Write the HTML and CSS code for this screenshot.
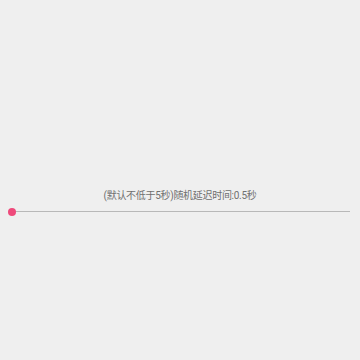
FILE: index.html
```html
<!DOCTYPE html>
<html>
<head>
<meta charset="utf-8">
<link rel="stylesheet" href="styles.css">
</head>
<body>
<div class="panel">
  <div class="label">(默认不低于5秒)随机延迟时间:0.5秒</div>
  <div class="slider">
    <div class="track"></div>
    <div class="thumb"></div>
  </div>
</div>
</body>
</html>
```
FILE: styles.css
```css
html, body {
  margin: 0;
  padding: 0;
  width: 360px;
  height: 360px;
  background: #efefef;
  font-family: "Roboto", "Noto Sans CJK SC", sans-serif;
}
.panel {
  padding-top: 188px;
  display: flex;
  flex-direction: column;
}
.label {
  text-align: center;
  font-size: 10px;
  line-height: 16px;
  letter-spacing: -0.3px;
  color: #707070;
}
.slider {
  position: relative;
  height: 15px;
  margin: 0 10px 0 12px;
  display: flex;
  align-items: center;
}
.track {
  flex: 1;
  height: 1px;
  background: #b8b8b8;
}
.thumb {
  position: absolute;
  left: -4px;
  top: 3.5px;
  width: 8px;
  height: 8px;
  border-radius: 50%;
  background: #ee4a7b;
}
```
